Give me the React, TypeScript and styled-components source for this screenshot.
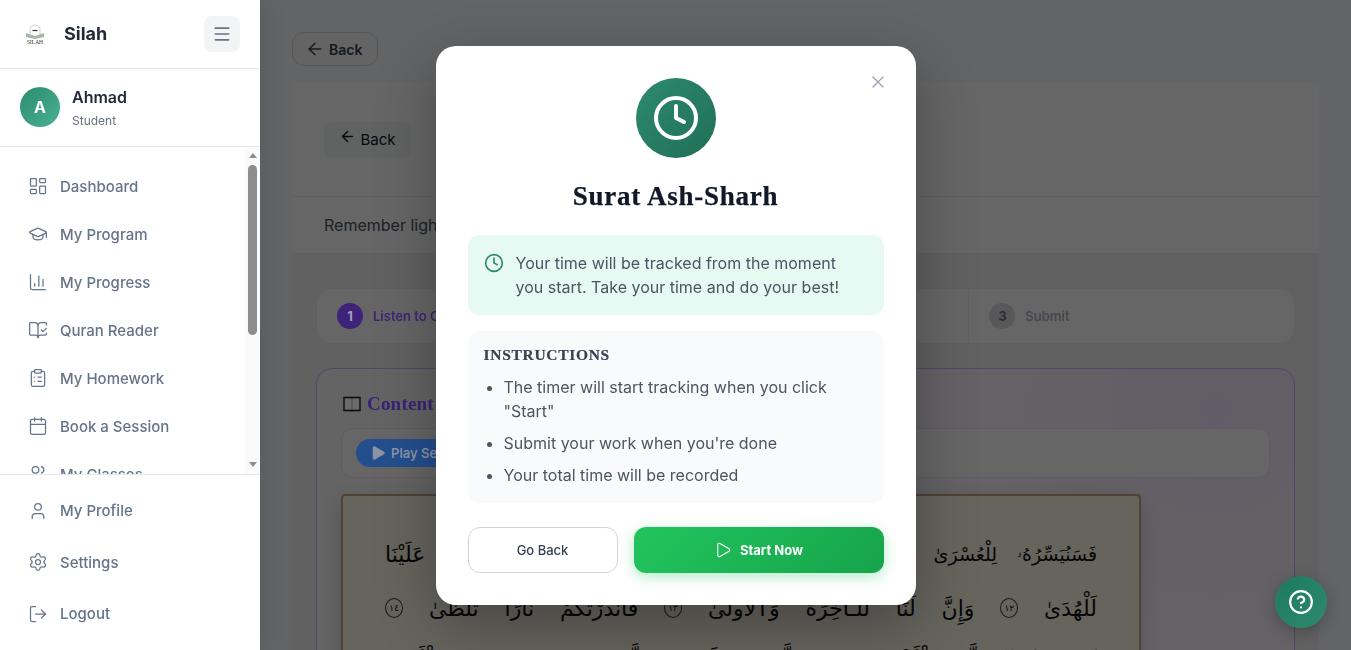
import styled, { createGlobalStyle } from "styled-components";
import {
  ArrowLeft,
  BookOpenCheck,
  Calendar,
  ChartColumn,
  CircleHelp,
  ClipboardList,
  Clock,
  GraduationCap,
  LayoutDashboard,
  LogOut,
  Menu,
  Play,
  Settings,
  User,
  Users,
  X,
} from "lucide-react";

const GlobalStyle = createGlobalStyle`
  * { box-sizing: border-box; }
  html, body { margin: 0; height: 100%; overflow: hidden; }
  body {
    font-family: Inter, "Liberation Sans", sans-serif;
    background: #f8fafc;
    color: #111827;
  }
`;

const Layout = styled.div`
  display: flex;
  height: 100vh;
  overflow: hidden;
`;

const Sidebar = styled.aside`
  position: relative;
  z-index: 20;
  flex: 0 0 260px;
  display: flex;
  flex-direction: column;
  background: #fff;
  box-shadow: 2px 0 24px rgba(0, 0, 0, 0.1);
`;

const Brand = styled.div`
  height: 69px;
  flex: none;
  display: flex;
  align-items: center;
  padding: 0 20px 1px 24px;
  border-bottom: 1px solid #e5e7eb;
`;

const BrandName = styled.span`
  margin-left: 18px;
  flex: 1;
  font-size: 18px;
  font-weight: 700;
  color: #1f2937;
`;

const MenuButton = styled.button`
  width: 36px;
  height: 36px;
  display: flex;
  align-items: center;
  justify-content: center;
  border: 0;
  border-radius: 8px;
  background: #f3f4f6;
  color: #6b7280;
`;

const Profile = styled.div`
  height: 78px;
  flex: none;
  display: flex;
  align-items: center;
  gap: 12px;
  padding: 0 20px 1px;
  border-bottom: 1px solid #e5e7eb;
`;

const Avatar = styled.div`
  width: 40px;
  height: 40px;
  border-radius: 50%;
  display: flex;
  align-items: center;
  justify-content: center;
  background: linear-gradient(135deg, #2d8a6e, #48b294);
  color: #fff;
  font-size: 16px;
  font-weight: 700;
`;

const ProfileName = styled.div`
  font-size: 16px;
  font-weight: 600;
  line-height: 24px;
  color: #1f2937;
`;

const ProfileRole = styled.div`
  margin-top: 4px;
  font-size: 12px;
  line-height: 16px;
  color: #6b7280;
`;

const NavArea = styled.div`
  position: relative;
  flex: 1;
  min-height: 0;
`;

const Nav = styled.nav`
  height: 100%;
  overflow: hidden;
  padding-top: 15px;
`;

/* the page's scrollbar, headless chrome does not paint a real one */
const ScrollRail = styled.div`
  position: absolute;
  top: 0;
  right: 0;
  bottom: 0;
  width: 15px;
  display: flex;
  flex-direction: column;
  align-items: center;
  background: #fafafa;
`;

const ScrollUp = styled.span`
  margin-top: 6px;
  border-left: 4.5px solid transparent;
  border-right: 4.5px solid transparent;
  border-bottom: 5px solid #8d8d8d;
`;

const ScrollThumb = styled.span`
  width: 9px;
  height: 170px;
  margin-top: 7px;
  border-radius: 5px;
  background: #8d8d8d;
`;

const ScrollDown = styled.span`
  margin-top: auto;
  margin-bottom: 7px;
  border-left: 4.5px solid transparent;
  border-right: 4.5px solid transparent;
  border-top: 5px solid #8d8d8d;
`;

const NavItem = styled.a<{ $tall?: boolean }>`
  display: flex;
  align-items: center;
  gap: 12px;
  height: ${(p) => (p.$tall ? "51.5px" : "48px")};
  padding-left: 28px;
  font-size: 15px;
  font-weight: 500;
  color: #64748b;
`;

const BottomNav = styled.div`
  flex: none;
  height: 176px;
  padding-top: 10px;
  border-top: 1px solid #e5e7eb;
`;

const Main = styled.main`
  flex: 1;
  min-width: 0;
  padding: 32px;
`;

const BackLink = styled.button`
  display: flex;
  align-items: center;
  gap: 4px;
  height: 34px;
  padding: 0 15px 0 12px;
  border: 1px solid #d1d5db;
  border-radius: 12px;
  background: #f9fafb;
  color: #374151;
  font: 600 14px Inter, sans-serif;
`;

const HeaderCard = styled.section`
  margin-top: 16px;
  background: #fff;
`;

const HeaderTop = styled.div`
  height: 115px;
  padding: 40px 32px 0;
  border-bottom: 1px solid #f0f0f0;
`;

const GhostBack = styled.button`
  height: 35px;
  width: 87px;
  display: flex;
  align-items: center;
  justify-content: center;
  gap: 4px;
  padding: 0;
  border: 0;
  border-radius: 6px;
  background: #f3f4f6;
  color: #111827;
  font: 400 15px Inter, sans-serif;
  svg {
    margin-top: -6px;
  }
`;

const Reminder = styled.div`
  height: 57px;
  padding: 0 32px;
  display: flex;
  align-items: center;
  border-bottom: 1px solid #f0f0f0;
  font-size: 16px;
  color: #4b5563;
`;

const Body = styled.div`
  padding: 34px 24px 0;
  background: #f3f3f3;
`;

const Steps = styled.div`
  height: 56px;
  display: grid;
  grid-template-columns: repeat(3, 1fr);
  border: 1px solid #f0f0f0;
  border-radius: 16px;
  background: #fff;
`;

const Step = styled.div`
  display: flex;
  align-items: center;
  gap: 10px;
  padding-left: 20px;
  & + & {
    border-left: 1px solid #f0f0f0;
  }
`;

/* the coloured parts keep more colour than the black backdrop would leave,
   so they sit just above it with their already dimmed colours */
const StepNumber = styled.span<{ $active?: boolean }>`
  position: relative;
  z-index: 11;
  width: 26px;
  height: 26px;
  border-radius: 50%;
  display: flex;
  align-items: center;
  justify-content: center;
  font-size: 13px;
  font-weight: 700;
  background: ${(p) => (p.$active ? "#3d2379" : "#58585a")};
  color: ${(p) => (p.$active ? "#a89dc4" : "#2f2f31")};
`;

const StepLabel = styled.span<{ $active?: boolean }>`
  position: relative;
  z-index: 11;
  font-size: 13px;
  font-weight: 600;
  color: ${(p) => (p.$active ? "#3d2675" : "#47474d")};
`;

const ContentCard = styled.section`
  margin-top: 24px;
  height: 400px;
  padding: 16px 24px;
  border: 1px solid #c4b5fd;
  border-radius: 16px;
  background: radial-gradient(circle at 92% 10%, #f3e8ff 0, #faf5ff 22%, #fbf9fb 60%);
`;

const ContentTitle = styled.h2`
  position: relative;
  z-index: 11;
  margin: 0;
  height: 43px;
  padding-bottom: 5px;
  display: flex;
  align-items: center;
  gap: 6px;
  font: 700 19px "Liberation Serif", serif;
  letter-spacing: 0.2px;
  color: #3a2278;
  svg {
    margin-left: 2px;
  }
`;

const Player = styled.div`
  height: 50px;
  display: flex;
  align-items: center;
  padding-left: 14px;
  border: 1px solid #e9e5f5;
  border-radius: 12px;
  background: #fff;
`;

const PlayButton = styled.button`
  position: relative;
  z-index: 11;
  height: 28px;
  display: flex;
  align-items: center;
  gap: 4px;
  padding: 0 16px 0 13px;
  border: 0;
  border-radius: 14px;
  background: #234f8e;
  color: #8a94a6;
  font: 600 13px Inter, sans-serif;
`;

const Mushaf = styled.div`
  width: 800px;
  height: 300px;
  margin-top: 16px;
  padding: 31px 42px 0 42px;
  border: 2px solid #c9a27a;
  border-radius: 4px;
  background: #fdf9e8;
  box-shadow: 0 6px 20px rgba(0, 0, 0, 0.15);
`;

const Verse = styled.div`
  height: 54px;
  display: flex;
  align-items: center;
  justify-content: space-between;
  font: 400 22px "DejaVu Sans", sans-serif;
  color: #111;
`;

const VerseGroup = styled.span`
  display: flex;
  gap: 20px;
  font-size: 19px;
`;

const AyahMark = styled.span`
  width: 18px;
  height: 20px;
  display: flex;
  align-items: center;
  justify-content: center;
  border: 1px solid #444;
  border-radius: 50%;
  font-size: 9px;
`;

const Backdrop = styled.div`
  position: fixed;
  inset: 0;
  z-index: 10;
  background: rgba(0, 0, 0, 0.6);
`;

const ModalLayer = styled.div`
  position: fixed;
  inset: 0;
  z-index: 12;
  display: flex;
  align-items: center;
  justify-content: center;
`;

const Modal = styled.div`
  position: relative;
  width: 480px;
  padding: 32px;
  border-radius: 20px;
  background: #fff;
  box-shadow: 0 20px 60px rgba(0, 0, 0, 0.3);
`;

const CloseButton = styled.button`
  position: absolute;
  top: 26px;
  right: 28px;
  padding: 0;
  display: flex;
  border: 0;
  background: none;
  color: #9ca3af;
`;

const ClockBadge = styled.div`
  width: 80px;
  height: 80px;
  margin: 0 auto;
  border-radius: 50%;
  display: flex;
  align-items: center;
  justify-content: center;
  background: linear-gradient(135deg, #2d8a6e, #1f6f56);
  color: #fff;
`;

const Title = styled.h2`
  margin: 20px 0 0;
  font: 700 27px/36px "Liberation Serif", serif;
  letter-spacing: 0.75px;
  -webkit-text-stroke: 0.25px #111827;
  text-align: center;
  color: #111827;
`;

const Notice = styled.div`
  margin-top: 21px;
  display: flex;
  gap: 12px;
  padding: 16px;
  border-radius: 12px;
  background: #e6f9f3;
  color: #4b5563;
  font-size: 16px;
  line-height: 24px;
  svg {
    flex: none;
    margin-top: 2px;
    color: #2d8a6e;
  }
`;

const Instructions = styled.div`
  margin-top: 16px;
  padding: 16px;
  border-radius: 12px;
  background: #f9fafb;
`;

const InstructionsTitle = styled.h3`
  margin: 0;
  font: 700 15.5px/16px "Liberation Serif", serif;
  letter-spacing: 0.7px;
  -webkit-text-stroke: 0.2px #374151;
  text-transform: uppercase;
  color: #374151;
`;

const InstructionsList = styled.ul`
  margin: 12px 0 0;
  padding-left: 20px;
  color: #4b5563;
  font-size: 16px;
  line-height: 24px;
  li + li {
    margin-top: 8px;
  }
`;

const Actions = styled.div`
  margin-top: 24px;
  display: flex;
  gap: 16px;
`;

const SecondaryButton = styled.button`
  flex: 0 0 150px;
  height: 46px;
  border: 1px solid #d1d5db;
  border-radius: 12px;
  background: #fff;
  color: #374151;
  font: 500 13px Inter, sans-serif;
`;

const PrimaryButton = styled.button`
  flex: 1;
  height: 46px;
  display: flex;
  align-items: center;
  justify-content: center;
  gap: 8px;
  border: 0;
  border-radius: 12px;
  background: linear-gradient(135deg, #22c55e, #16a34a);
  box-shadow: 0 4px 14px rgba(34, 197, 94, 0.35);
  color: #fff;
  font: 700 13px Inter, sans-serif;
`;

const HelpButton = styled.button`
  position: fixed;
  right: 24px;
  bottom: 22px;
  z-index: 30;
  width: 52px;
  height: 52px;
  display: flex;
  align-items: center;
  justify-content: center;
  border: 0;
  border-radius: 50%;
  background: linear-gradient(135deg, #1f7a5c, #2d8a6e);
  box-shadow: 0 4px 16px rgba(0, 0, 0, 0.25);
  color: #fff;
`;

function SilahLogo() {
  return (
    <svg width="22" height="22" viewBox="0 0 22 22">
      <path d="M6 11V7a5 5 0 0 1 10 0v4" fill="none" stroke="#b8bdb8" strokeWidth="0.7" />
      <path d="M8.5 7.5h5" stroke="#333" strokeWidth="1.2" />
      <path d="M2 10l9 3 9-3v4l-9 2-9-2z" fill="#a5b8a5" />
      <text x="11" y="21" textAnchor="middle" fontSize="5.5" fontFamily="Liberation Serif" fill="#333">
        SILAH
      </text>
    </svg>
  );
}

function BookGlyph() {
  return (
    <svg width="18" height="16" viewBox="0 0 18 16">
      <path d="M1 1.5h7.5l.5.5.5-.5H17v13H9.5L9 15l-.5-.5H1z" fill="#6a6a6c" stroke="#0c0c0c" strokeWidth="1.4" />
      <path d="M9 2.5v11.5" stroke="#4a4a4c" strokeWidth="1" />
    </svg>
  );
}

const navItems = [
  { label: "Dashboard", icon: LayoutDashboard },
  { label: "My Program", icon: GraduationCap },
  { label: "My Progress", icon: ChartColumn },
  { label: "Quran Reader", icon: BookOpenCheck },
  { label: "My Homework", icon: ClipboardList },
  { label: "Book a Session", icon: Calendar },
  { label: "My Classes", icon: Users },
];

const bottomItems = [
  { label: "My Profile", icon: User },
  { label: "Settings", icon: Settings },
  { label: "Logout", icon: LogOut },
];

function App() {
  return (
    <Layout>
      <GlobalStyle />
      <Sidebar>
        <Brand>
          <SilahLogo />
          <BrandName>Silah</BrandName>
          <MenuButton>
            <Menu size={20} strokeWidth={2} />
          </MenuButton>
        </Brand>
        <Profile>
          <Avatar>A</Avatar>
          <div>
            <ProfileName>Ahmad</ProfileName>
            <ProfileRole>Student</ProfileRole>
          </div>
        </Profile>
        <NavArea>
          <Nav>
            {navItems.map((item) => (
              <NavItem key={item.label}>
                <item.icon size={20} strokeWidth={1.5} />
                {item.label}
              </NavItem>
            ))}
          </Nav>
          <ScrollRail>
            <ScrollUp />
            <ScrollThumb />
            <ScrollDown />
          </ScrollRail>
        </NavArea>
        <BottomNav>
          {bottomItems.map((item) => (
            <NavItem key={item.label} $tall>
              <item.icon size={20} strokeWidth={1.5} />
              {item.label}
            </NavItem>
          ))}
        </BottomNav>
      </Sidebar>
      <Main>
        <BackLink>
          <ArrowLeft size={20} strokeWidth={1.75} />
          Back
        </BackLink>
        <HeaderCard>
          <HeaderTop>
            <GhostBack>
              <ArrowLeft size={17} />
              Back
            </GhostBack>
          </HeaderTop>
          <Reminder>Remember light</Reminder>
        </HeaderCard>
        <Body>
          <Steps>
            <Step>
              <StepNumber $active>1</StepNumber>
              <StepLabel $active>Listen to C</StepLabel>
            </Step>
            <Step />
            <Step>
              <StepNumber>3</StepNumber>
              <StepLabel>Submit</StepLabel>
            </Step>
          </Steps>
          <ContentCard>
            <ContentTitle>
              <BookGlyph />
              Content
            </ContentTitle>
            <Player>
              <PlayButton>
                <Play size={18} fill="currentColor" stroke="none" />
                Play Se
              </PlayButton>
            </Player>
            <Mushaf dir="rtl" lang="ar">
              <Verse>
                <VerseGroup>
                  <span>فَسَنُيَسِّرُهُۥ</span>
                  <span>لِلْعُسْرَىٰ</span>
                </VerseGroup>
                <span>عَلَيْنَا</span>
              </Verse>
              <Verse>
                <span>لَلْهُدَىٰ</span>
                <AyahMark>١٢</AyahMark>
                <span>وَإِنَّ</span>
                <span>لَنَا</span>
                <span>لَلْـَٔاخِرَةَ</span>
                <span>وَٱلْأُولَىٰ</span>
                <AyahMark>١٣</AyahMark>
                <span>فَأَنذَرْتُكُمْ</span>
                <span>نَارًا</span>
                <span>تَلَظَّىٰ</span>
                <AyahMark>١٤</AyahMark>
              </Verse>
              <Verse>
                <span>لَا</span>
                <span>يَصْلَىٰهَآ</span>
                <span>إِلَّا</span>
                <span>ٱلْأَشْقَى</span>
                <AyahMark>١٥</AyahMark>
                <span>ٱلَّذِى</span>
                <span>كَذَّبَ</span>
                <span>وَتَوَلَّىٰ</span>
                <AyahMark>١٦</AyahMark>
                <span>وَسَيُجَنَّبُهَا</span>
                <span>ٱلْأَتْقَى</span>
              </Verse>
            </Mushaf>
          </ContentCard>
        </Body>
      </Main>
      <Backdrop />
      <ModalLayer>
        <Modal>
          <CloseButton>
            <X size={20} strokeWidth={1.5} />
          </CloseButton>
          <ClockBadge>
            <Clock size={48} strokeWidth={2} />
          </ClockBadge>
          <Title>Surat Ash-Sharh</Title>
          <Notice>
            <Clock size={20} />
            <span>Your time will be tracked from the moment you start. Take your time and do your best!</span>
          </Notice>
          <Instructions>
            <InstructionsTitle>Instructions</InstructionsTitle>
            <InstructionsList>
              <li>The timer will start tracking when you click "Start"</li>
              <li>Submit your work when you're done</li>
              <li>Your total time will be recorded</li>
            </InstructionsList>
          </Instructions>
          <Actions>
            <SecondaryButton>Go Back</SecondaryButton>
            <PrimaryButton>
              <Play size={18} strokeWidth={1.5} />
              Start Now
            </PrimaryButton>
          </Actions>
        </Modal>
      </ModalLayer>
      <HelpButton>
        <CircleHelp size={26} />
      </HelpButton>
    </Layout>
  );
}

export default App;
